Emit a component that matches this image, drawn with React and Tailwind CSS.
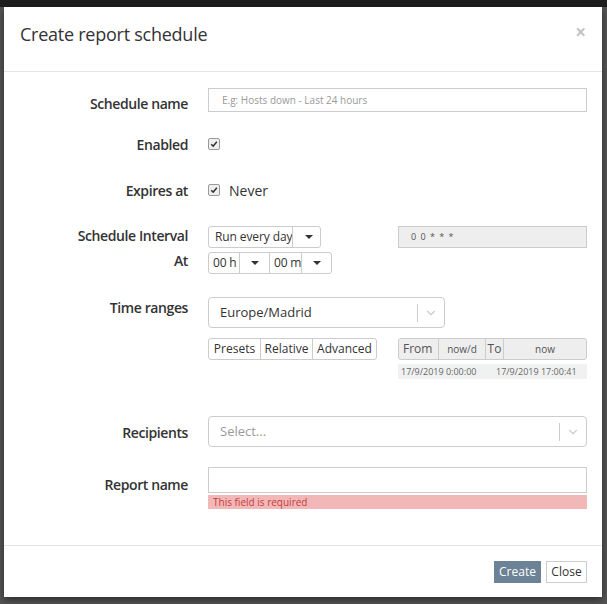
import { ChevronDown } from "lucide-react";

function Caret({ w = "w-[32px]" }) {
  return (
    <span className={`flex items-center justify-center ${w} border-l border-[#ccc] h-full shrink-0`}>
      <span className="w-0 h-0 border-l-[4px] border-r-[4px] border-t-[4px] border-l-transparent border-r-transparent border-t-[#333]" />
    </span>
  );
}

function Check() {
  return (
    <span className="w-[12px] h-[12px] rounded-[2px] border border-[#999] bg-[#eee] flex items-center justify-center">
      <svg viewBox="0 0 10 10" className="w-[8px] h-[8px]">
        <path d="M1.5 5.2 L4 7.6 L8.6 2.2" fill="none" stroke="#333" strokeWidth="1.8" />
      </svg>
    </span>
  );
}

function Label({ children, className = "" }) {
  return (
    <div className={`w-[184px] shrink-0 text-right font-semibold text-[14px] tracking-[-0.4px] leading-[19px] text-[#333] ${className}`}>
      {children}
    </div>
  );
}

export default function App() {
  return (
    <div
      className="w-[607px] h-[604px] bg-[#555] relative overflow-hidden"
      style={{ fontFamily: '"Open Sans", "Noto Sans", sans-serif' }}
    >
      <div className="h-[7px] bg-[#1e1e1e]" />
      <div className="absolute left-[4px] top-[7px] w-[598px] h-[590px] bg-white shadow-[0_3px_8px_rgba(0,0,0,0.5)] flex flex-col">
        {/* Header */}
        <div className="h-[65px] border-b border-[#e5e5e5] flex items-start justify-between pl-[16px] pr-[16px] pt-[14px] shrink-0">
          <h4 className="text-[18px] tracking-[-0.25px] text-[#333]">Create report schedule</h4>
          <span className="text-[#c4c4c4] text-[19px] font-bold leading-none mt-[2px]">×</span>
        </div>

        {/* Body */}
        <div className="flex-1 pt-[16px]">
          <div className="flex items-start h-[24px]">
            <Label className="pt-[6px]">Schedule name</Label>
            <div className="ml-[20px] w-[379px] h-[24px] border border-[#ccc] flex items-center pl-[13px] text-[10px] text-[#999]">
              E.g: Hosts down - Last 24 hours
            </div>
          </div>

          <div className="flex items-center mt-[20px] h-[24px]">
            <Label>Enabled</Label>
            <div className="ml-[20px]"><Check /></div>
          </div>

          <div className="flex items-center mt-[22px] h-[24px]">
            <Label>Expires at</Label>
            <div className="ml-[20px] flex items-center gap-[9px]">
              <Check />
              <span className="text-[14px] text-[#333]">Never</span>
            </div>
          </div>

          <div className="flex mt-[24px]">
            <div className="w-[184px] shrink-0 text-right font-semibold text-[14px] tracking-[-0.4px] text-[#333]">
              <div className="h-[21px] leading-[20px]">Schedule Interval</div>
              <div className="h-[22px] leading-[20px] mt-[4px]">At</div>
            </div>
            <div className="ml-[20px] flex-1 flex items-start pr-[15px]">
              <div className="flex flex-col gap-[4px]">
                <div className="flex h-[22px] w-[113px] border border-[#ccc] rounded-[3px] text-[12px] tracking-[-0.1px] text-[#333] whitespace-nowrap">
                  <span className="flex-1 flex items-center pl-[6px]">Run every day</span>
                  <Caret />
                </div>
                <div className="flex h-[22px] w-[124px] border border-[#ccc] rounded-[3px] text-[12px] tracking-[-0.2px] text-[#333] whitespace-nowrap">
                  <span className="w-[30px] flex items-center pl-[4px]">00 h</span>
                  <Caret w="w-[30px]" />
                  <span className="w-[32px] flex items-center pl-[4px] border-l border-[#ccc]">00 m</span>
                  <Caret w="w-[30px]" />
                </div>
              </div>
              <div className="ml-auto w-[189px] h-[22px] bg-[#eee] border border-[#ccc] flex items-center pl-[12px] text-[9px] text-[#555] tracking-[1px]">
                0 0 * * *
              </div>
            </div>
          </div>

          <div className="flex mt-[23px]">
            <Label className="pt-[1px]">Time ranges</Label>
            <div className="ml-[20px] flex-1 pr-[15px]">
              <div className="w-[237px] h-[31px] border border-[#ccc] rounded-[4px] flex items-center">
                <span className="flex-1 pl-[11px] text-[13px] text-[#333]">Europe/Madrid</span>
                <span className="w-px h-[18px] bg-[#ccc]" />
                <ChevronDown className="w-[14px] h-[14px] text-[#ccc] mx-[6px]" strokeWidth={2} />
              </div>
              <div className="flex items-start mt-[10px]">
                <div className="flex h-[22px] border border-[#ccc] rounded-[3px] text-[12px] text-[#333] whitespace-nowrap">
                  <span className="w-[51px] flex items-center justify-center">Presets</span>
                  <span className="w-[52px] flex items-center justify-center border-l border-[#ccc]">Relative</span>
                  <span className="w-[64px] flex items-center justify-center border-l border-[#ccc]">Advanced</span>
                </div>
                <div className="ml-auto w-[189px]">
                  <div className="flex h-[22px] bg-[#eee] border border-[#ccc] rounded-[3px] text-[#555] whitespace-nowrap">
                    <span className="w-[39px] flex items-center pl-[4px] text-[12px]">From</span>
                    <span className="w-[47px] flex items-center justify-center border-l border-[#ccc] text-[10px]">now/d</span>
                    <span className="w-[18px] flex items-center justify-center border-l border-[#ccc] text-[12px]">To</span>
                    <span className="flex-1 flex items-center justify-center border-l border-[#ccc] text-[10px]">now</span>
                  </div>
                  <div className="mt-[4px] h-[15px] bg-[#f0f2f2] flex items-center pl-[3px] text-[9px] text-[#666] whitespace-nowrap">
                    <span className="w-[95px]">17/9/2019 0:00:00</span>
                    <span>17/9/2019 17:00:41</span>
                  </div>
                </div>
              </div>
            </div>
          </div>

          <div className="flex items-start mt-[37px]">
            <Label className="pt-[7px]">Recipients</Label>
            <div className="ml-[20px] w-[379px] h-[31px] border border-[#ccc] rounded-[4px] flex items-center">
              <span className="flex-1 pl-[11px] text-[13px] text-[#999]">Select...</span>
              <span className="w-px h-[18px] bg-[#ccc]" />
              <ChevronDown className="w-[14px] h-[14px] text-[#ccc] mx-[6px]" strokeWidth={2} />
            </div>
          </div>

          <div className="flex mt-[20px]">
            <Label className="pt-[8px]">Report name</Label>
            <div className="ml-[20px] w-[379px]">
              <div className="h-[26px] border border-[#ccc]" />
              <div className="mt-[2px] h-[14px] bg-[#f2b8b8] flex items-center pl-[5px] text-[10px] text-[#c43c3c]">
                This field is required
              </div>
            </div>
          </div>
        </div>

        {/* Footer */}
        <div className="h-[52px] border-t border-[#e5e5e5] flex items-center justify-end gap-[5px] pr-[15px] shrink-0">
          <button className="h-[22px] w-[47px] bg-[#6c8296] text-white text-[12px]">Create</button>
          <button className="h-[22px] w-[41px] border border-[#ccc] bg-white text-[#333] text-[12px]">Close</button>
        </div>
      </div>
    </div>
  );
}
